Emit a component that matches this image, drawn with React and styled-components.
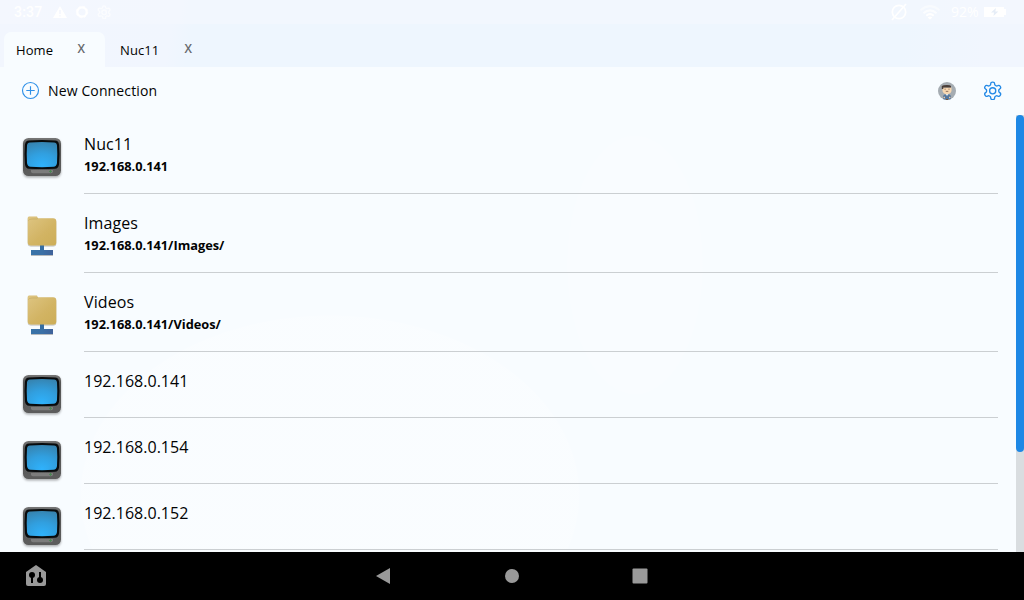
import React from "react";
import styled, { createGlobalStyle } from "styled-components";

const GlobalStyle = createGlobalStyle`
  * { box-sizing: border-box; }
  body { margin: 0; overflow: hidden; font-family: "Open Sans", "Noto Sans", sans-serif; color: #020303; }
  svg { display: block; }
`;

const Screen = styled.div`
  width: 1024px;
  height: 600px;
  display: flex;
  flex-direction: column;
  overflow: hidden;
  background: #f8fcff;
`;

const Top = styled.header`
  height: 67px;
  flex: none;
  background: linear-gradient(100deg, #f2f6fe 0%, #f1f6fe 17%, #eef6fe 19%, #eef6fe 88%, #f1f6fe 96%);
`;

const StatusBar = styled.div`
  height: 24px;
  display: flex;
  align-items: center;
  padding: 0 18px 0 14px;
  color: #fff;
  font-family: Roboto, sans-serif;
  font-size: 14px;
  line-height: 24px;
  background: rgba(246, 248, 253, 0.5);
`;

const Clock = styled.span`
  width: 39px;
  font-weight: 500;
  letter-spacing: 0.2px;
`;

const StatusIcons = styled.div`
  display: flex;
  align-items: center;
  gap: 8px;
`;

const StatusRight = styled.div`
  margin-left: auto;
  display: flex;
  align-items: center;
`;

const WifiSlot = styled.div`
  margin-left: 11px;
`;

const Battery = styled.span`
  width: 33px;
  margin-left: 10px;
  font-family: "Open Sans", sans-serif;
`;

const Tabs = styled.nav`
  height: 43px;
  display: flex;
  align-items: flex-end;
  gap: 3px;
  padding-left: 4px;
`;

const Tab = styled.div`
  width: ${(p) => p.$width}px;
  height: 35px;
  display: flex;
  justify-content: space-between;
  padding: 0 ${(p) => p.$right}px 0 12px;
  border-radius: 7px 7px 0 0;
  background: ${(p) => (p.$active ? "#f8fcff" : "transparent")};
  font-size: 13px;
  letter-spacing: 0.1px;
  line-height: 36px;
`;

const Close = styled.span`
  color: #66696d;
  font-size: 12px;
  font-weight: 600;
  letter-spacing: 0;
  line-height: 34px;
`;

const Toolbar = styled.div`
  height: 48px;
  flex: none;
  display: flex;
  align-items: center;
  padding: 0 22px 1px 21px;
  font-size: 14px;
`;

const NewConnection = styled.div`
  display: flex;
  align-items: center;
  gap: 8px;
  letter-spacing: 0.13px;
  line-height: 48px;
`;

const Actions = styled.div`
  margin-left: auto;
  display: flex;
  align-items: center;
  gap: 27px;
`;

const Content = styled.main`
  height: 437px;
  flex: none;
  display: flex;
  overflow: hidden;
  background:
    radial-gradient(ellipse 250px 180px at 330px 380px, rgba(255, 255, 255, 0.22) 99.5%, transparent 100%),
    radial-gradient(ellipse 68px 130px at 635px 150px, rgba(255, 255, 255, 0.15) 99%, transparent 100%),
    #f8fcff;
`;

const List = styled.div`
  flex: 1;
  height: 437px;
  overflow: hidden;
`;

const Row = styled.div`
  height: ${(p) => (p.$tall ? 79 : 66)}px;
  display: flex;
  gap: 18px;
  padding: 0 18px;
`;

const IconSlot = styled.div`
  width: 48px;
  height: 48px;
  flex: none;
  margin-top: 17px;
`;

const RowText = styled.div`
  flex: 1;
  padding-top: 18px;
  border-bottom: 1px solid #cbcfd2;
`;

const Title = styled.div`
  font-size: 16px;
  letter-spacing: ${(p) => (p.$named ? 0.1 : 0.02)}px;
  line-height: 22px;
`;

const Address = styled.div`
  font-size: 12.8px;
  font-weight: 700;
  line-height: 18px;
  margin-top: 2px;
`;

const ScrollTrack = styled.div`
  width: 8px;
  background: #d9dde0;
`;

const ScrollThumb = styled.div`
  height: 337px;
  border-radius: 4px;
  background: #1e88e5;
`;

const NavBar = styled.footer`
  height: 48px;
  flex: none;
  display: grid;
  grid-template-columns: 318px 130px 128px 128px 320px;
  align-items: center;
  justify-items: center;
  background: #000;
`;

const HomeShortcut = styled.div`
  justify-self: start;
  padding-left: 25px;
`;

const Warning = () => (
  <svg width="14" height="14" viewBox="0 0 14 14">
    <path d="M7 1 14 13H0Z" fill="#fff" />
    <path d="M7 5v4M7 10.2v1.4" stroke="#f1f5fd" strokeWidth="1.3" />
  </svg>
);

const Badge = () => (
  <svg width="14" height="14" viewBox="0 0 14 14">
    <circle cx="7" cy="7" r="4.7" fill="none" stroke="#fff" strokeWidth="2.2" />
    <circle cx="7" cy="7" r="5.8" fill="none" stroke="#fff" strokeWidth="1" strokeDasharray="2.4 2.15" />
  </svg>
);

const gearPath =
  "M12.22 2h-.44a2 2 0 0 0-2 2v.18a2 2 0 0 1-1 1.73l-.43.25a2 2 0 0 1-2 0l-.15-.08a2 2 0 0 0-2.73.73l-.22.38a2 2 0 0 0 .73 2.73l.15.1a2 2 0 0 1 1 1.72v.51a2 2 0 0 1-1 1.74l-.15.09a2 2 0 0 0-.73 2.73l.22.38a2 2 0 0 0 2.73.73l.15-.08a2 2 0 0 1 2 0l.43.25a2 2 0 0 1 1 1.73V20a2 2 0 0 0 2 2h.44a2 2 0 0 0 2-2v-.18a2 2 0 0 1 1-1.73l.43-.25a2 2 0 0 1 2 0l.15.08a2 2 0 0 0 2.73-.73l.22-.39a2 2 0 0 0-.73-2.73l-.15-.08a2 2 0 0 1-1-1.74v-.5a2 2 0 0 1 1-1.74l.15-.09a2 2 0 0 0 .73-2.73l-.22-.38a2 2 0 0 0-2.73-.73l-.15.08a2 2 0 0 1-2 0l-.43-.25a2 2 0 0 1-1-1.73V4a2 2 0 0 0-2-2z";

const Gear = ({ size, color, weight, opacity = 1 }) => (
  <svg width={size} height={size} viewBox="1 0.8 21.6 21.6" fill="none" stroke={color} strokeWidth={weight} opacity={opacity}>
    <path d={gearPath} />
    <circle cx="12" cy="12" r="3.5" />
  </svg>
);

const NoSignal = () => (
  <svg width="18" height="18" viewBox="0 0 18 18" fill="none" stroke="#fff" strokeWidth="1.7">
    <circle cx="9" cy="9" r="6.7" />
    <path d="M16 1 2 17" />
  </svg>
);

const Wifi = () => (
  <svg width="22" height="16" viewBox="0 0 22 16" fill="none" stroke="#fff" strokeWidth="2.1">
    <path d="M1.4 6.2Q11-1.8 20.6 6.2" opacity=".45" />
    <path d="M4.4 9.3Q11 3.6 17.6 9.3" opacity=".7" />
    <path d="M7.3 11.7Q11 8.6 14.7 11.7" />
    <path d="M8.6 13.4Q11 11.4 13.4 13.4L11 15.6Z" fill="#fff" stroke="none" />
  </svg>
);

const BatteryIcon = () => (
  <svg width="22" height="10" viewBox="0 0 22 10">
    <path d="M0 0h20v2h2v6h-2v2H0Z" fill="#fff" />
    <path d="m12 1-5 4.5h3L9.5 9l4.8-4.5h-3Z" fill="#e6edf7" />
  </svg>
);

const Plus = () => (
  <svg width="19" height="19" viewBox="0 0 19 19" fill="none" stroke="#2e90e8" strokeWidth="1.15">
    <circle cx="9.5" cy="9.5" r="8" />
    <path d="M9.5 5.3v8.4M5.3 9.5h8.4" />
  </svg>
);

const Avatar = () => (
  <svg width="18" height="18" viewBox="0 0 18 18">
    <defs>
      <clipPath id="face-clip"><circle cx="9" cy="9" r="9" /></clipPath>
    </defs>
    <g clipPath="url(#face-clip)">
      <path d="M0 0h18v18H0z" fill="#a5acb2" />
      <path d="M5 18v-4q1-2 4-2t4 2v4z" fill="#56779d" />
      <path d="m7.500 12 1.500 2 1.500-2v-1h-3z" fill="#e9eef2" />
      <path d="M4.500 5.500h9V9q-.6 2.800-4.500 3.200Q5 12 4.500 9z" fill="#f8d7b0" />
      <path d="M3.800 7V4Q5 3 9 3q3.500 0 4 1v1.500H5.300V7z" fill="#493d38" />
      <path d="M6.500 7.200h1.200M10.400 7.200h1.200M7.800 9.400h2.500" stroke="#8a6b59" strokeWidth=".9" />
      <path d="M5.500 15.500H7M11 15.500h1.500" stroke="#edc9a5" strokeWidth="1.500" />
      <path d="M8 17.500h2" stroke="#81532c" />
    </g>
  </svg>
);

const Monitor = () => (
  <svg width="48" height="48" viewBox="0 -0.5 48 48">
    <defs>
      <radialGradient id="glass" cx=".5" cy=".95" r="1">
        <stop stopColor="#2fb2fc" />
        <stop offset=".5" stopColor="#319fdf" />
        <stop offset="1" stopColor="#3682ae" />
      </radialGradient>
      <linearGradient id="shell" x2="0" y2="1">
        <stop stopColor="#777" />
        <stop offset=".2" stopColor="#555" />
        <stop offset="1" stopColor="#5c5c5c" />
      </linearGradient>
      <filter id="tv-shadow" x="-10%" y="-10%" width="120%" height="125%">
        <feDropShadow dx="0" dy="1.500" stdDeviation=".9" floodOpacity=".32" />
      </filter>
    </defs>
    <rect x="5" y="5.500" width="38" height="38" rx="5.500" fill="url(#shell)" filter="url(#tv-shadow)" />
    <path d="M11 8Q24 7 37 8 40.500 8 41 12 42 21 41 32 40.500 36 37 36.300 24 36.800 11 36.300 7.500 36 7 32 6 21 7 12 7.500 8 11 8Z" fill="#080b0d" />
    <path d="M12 10Q24 9 36 10 38.700 10.100 39 13 39.600 22 39 30.500 38.500 34 35.500 34.300 24 35 12.500 34.300 9.500 34 9 30.500 8.400 22 9 13 9.300 10.100 12 10Z" fill="url(#glass)" />
    <path d="M13 37.400h22v1.500q0 1.800-2 1.800H15q-2 0-2-1.800Z" fill="#7c7c7c" />
    <path d="M31 38.900h3M32.500 37.400v3" stroke="#4a8752" />
  </svg>
);

const SharedFolder = () => (
  <svg width="48" height="48" viewBox="0 0 48 48">
    <defs>
      <linearGradient id="folder" x2=".9" y2="1">
        <stop stopColor="#dec582" />
        <stop offset=".6" stopColor="#d2b464" />
        <stop offset="1" stopColor="#cdae59" />
      </linearGradient>
      <linearGradient id="plug" x2="1">
        <stop stopColor="#3973a8" />
        <stop offset=".5" stopColor="#3a70a6" />
        <stop offset="1" stopColor="#40629a" />
      </linearGradient>
      <filter id="folder-shadow" x="-15%" y="-10%" width="130%" height="125%">
        <feDropShadow dx="0" dy=".8" stdDeviation=".6" floodOpacity=".32" />
      </filter>
    </defs>
    <g filter="url(#folder-shadow)">
      <path d="M22 33h4v6h9v5H13v-5h9z" fill="url(#plug)" />
      <path d="M22 34h4v5h-4z" fill="#326ba0" opacity=".4" />
      <path d="M11 5.500h8l.8 1.800H35q3.300 0 3.300 3V31.500q0 3-3 3H13q-3.300 0-3.300-3V7Q9.700 5.500 11 5.500Z" fill="url(#folder)" />
      <path d="M10.300 9.700Q11 8 14 8h5l1-.6" fill="none" stroke="#c4a75f" strokeWidth=".6" />
    </g>
  </svg>
);

const HomeSettings = () => (
  <svg width="22" height="24" viewBox="0 0 22 24">
    <path d="M11 1 21 8v12q0 2-2 2H3q-2 0-2-2V8Z" fill="#999" />
    <circle cx="7" cy="11" r="3" />
    <circle cx="15" cy="16" r="3" />
    <path d="M7 11v8M15 8v8" stroke="#000" strokeWidth="2" />
  </svg>
);

const connections = [
  { title: "Nuc11", address: "192.168.0.141", Icon: Monitor },
  { title: "Images", address: "192.168.0.141/Images/", Icon: SharedFolder },
  { title: "Videos", address: "192.168.0.141/Videos/", Icon: SharedFolder },
  { title: "192.168.0.141", Icon: Monitor },
  { title: "192.168.0.154", Icon: Monitor },
  { title: "192.168.0.152", Icon: Monitor },
];

export default function App() {
  return (
    <Screen>
      <GlobalStyle />
      <Top>
        <StatusBar>
          <Clock>3:37</Clock>
          <StatusIcons>
            <Warning />
            <Badge />
            <Gear size={14} color="#fff" weight={2} opacity={0.65} />
          </StatusIcons>
          <StatusRight>
            <NoSignal />
            <WifiSlot><Wifi /></WifiSlot>
            <Battery>92%</Battery>
            <BatteryIcon />
          </StatusRight>
        </StatusBar>
        <Tabs>
          <Tab $active $width={101} $right={20}>Home<Close>X</Close></Tab>
          <Tab $width={103} $right={19}>Nuc11<Close>X</Close></Tab>
        </Tabs>
      </Top>
      <Toolbar>
        <NewConnection><Plus />New Connection</NewConnection>
        <Actions><Avatar /><Gear size={19} color="#2389e6" weight={1.5} /></Actions>
      </Toolbar>
      <Content>
        <List>
          {connections.map(({ title, address, Icon }) => (
            <Row key={title} $tall={Boolean(address)}>
              <IconSlot><Icon /></IconSlot>
              <RowText>
                <Title $named={Boolean(address)}>{title}</Title>
                {address && <Address>{address}</Address>}
              </RowText>
            </Row>
          ))}
        </List>
        <ScrollTrack><ScrollThumb /></ScrollTrack>
      </Content>
      <NavBar>
        <HomeShortcut><HomeSettings /></HomeShortcut>
        <svg width="16" height="18" viewBox="0 0 16 18"><path d="M15 1v16L1 9Z" fill="#999" /></svg>
        <svg width="16" height="16" viewBox="0 0 16 16"><circle cx="8" cy="8" r="7" fill="#999" /></svg>
        <svg width="16" height="16" viewBox="0 0 16 16"><rect x=".5" y=".5" width="15" height="15" rx="1" fill="#999" /></svg>
        <span />
      </NavBar>
    </Screen>
  );
}
